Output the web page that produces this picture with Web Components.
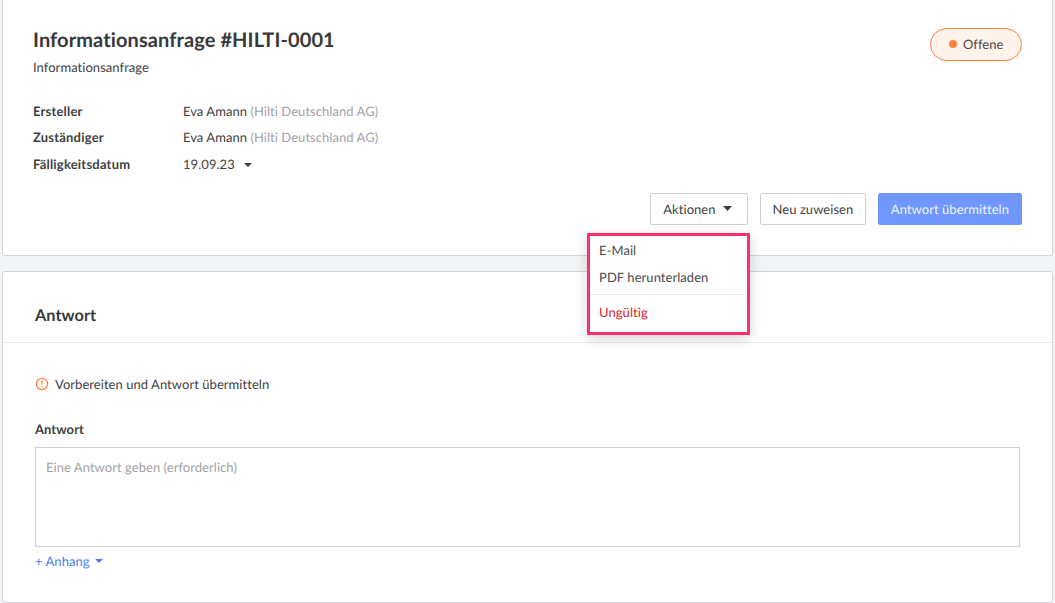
<!DOCTYPE html>
<html lang="de">
<head>
<meta charset="utf-8">
<title>Informationsanfrage</title>
<style>
  html, body { margin: 0; height: 100%; }
  body {
    background: #f3f4f6;
    color: #3f3f42;
    font-family: Lato, "Liberation Sans", sans-serif;
    font-size: 13px;
    font-variant-ligatures: none;
    letter-spacing: .05px;
    text-rendering: geometricPrecision;
    overflow: hidden;
    padding: 0 2px;
  }
</style>
</head>
<body>
<request-card>
  <span slot="title">Informationsanfrage #HILTI-0001</span>
  <span slot="subtitle">Informationsanfrage</span>
  <status-pill slot="status">Offene</status-pill>
  <info-row label="Ersteller">Eva Amann <small-muted>(Hilti Deutschland AG)</small-muted></info-row>
  <info-row label="Zuständiger">Eva Amann <small-muted>(Hilti Deutschland AG)</small-muted></info-row>
  <info-row label="Fälligkeitsdatum">19.09.23 <caret-icon style="margin-left:6px"></caret-icon></info-row>
  <actions-menu slot="actions"></actions-menu>
  <ui-button slot="actions" style="padding:0 11.5px">Neu zuweisen</ui-button>
  <ui-button slot="actions" primary style="padding:0 12px">Antwort übermitteln</ui-button>
</request-card>
<reply-card></reply-card>

<script>
function shadow(el, html) {
  el.attachShadow({mode: 'open'}).innerHTML = html;
}

customElements.define('caret-icon', class extends HTMLElement {
  constructor() {
    super();
    shadow(this, `
      <style>
        :host { display: inline-block; width: 8px; height: 4px; line-height: 0; vertical-align: middle; }
        svg { display: block; width: 100%; height: 100%; fill: currentColor; }
      </style>
      <svg viewBox="0 0 8 4" preserveAspectRatio="none"><path d="M0 0h8L4 4z"/></svg>`);
  }
});

customElements.define('small-muted', class extends HTMLElement {
  constructor() {
    super();
    shadow(this, `<style>:host { color: #a3a3a6; }</style><slot></slot>`);
  }
});

customElements.define('status-pill', class extends HTMLElement {
  constructor() {
    super();
    shadow(this, `
      <style>
        :host {
          display: inline-flex;
          align-items: center;
          gap: 5.5px;
          box-sizing: border-box;
          height: 33px;
          padding: 0 18px 1px 18px;
          border: 1px solid #ff8040;
          border-radius: 17px;
          background: #fff3ec;
          color: #4a4a4d;
          font-size: 13px;
        }
        i { width: 8px; height: 8px; border-radius: 50%; background: #ff8040; }
        span { margin-right: -.5px; }
      </style>
      <i></i><span><slot></slot></span>`);
  }
});

customElements.define('info-row', class extends HTMLElement {
  constructor() {
    super();
    shadow(this, `
      <style>
        :host { display: flex; align-items: center; height: 26.5px; }
        b { width: 150px; font-weight: 700; letter-spacing: .2px; color: #3f3f42; }
        span { color: #3f3f42; }
      </style>
      <b>${this.getAttribute('label')}</b><span><slot></slot></span>`);
  }
});

customElements.define('ui-button', class extends HTMLElement {
  constructor() {
    super();
    shadow(this, `
      <style>
        :host {
          display: inline-flex;
          align-items: center;
          box-sizing: border-box;
          height: 32px;
          padding: 0 12.5px;
          border: 1px solid #cfcfd3;
          border-radius: 2px;
          background: #fff;
          color: #3f3f42;
          font-size: 13px;
        }
        :host([primary]) {
          background: #6f97fd;
          border-color: #6f97fd;
          color: #eef3ff;
        }
      </style>
      <slot></slot>`);
  }
});

customElements.define('actions-menu', class extends HTMLElement {
  constructor() {
    super();
    shadow(this, `
      <style>
        :host { display: block; position: relative; }
        .menu {
          position: absolute;
          top: 40px;
          right: -2px;
          box-sizing: border-box;
          width: 163px;
          height: 102px;
          padding-top: 1px;
          background: #fff;
          border: 3px solid #ff2e6c;
          border-radius: 1px;
          box-shadow: 0 4px 14px rgba(0, 0, 0, .16);
          color: #4a4a4d;
          z-index: 2;
        }
        .item { display: flex; align-items: center; height: 27px; padding-left: 9px; }
        hr { margin: 3px 0 4px; border: 0; border-top: 1px solid #ececee; }
        .danger { color: #d91c2e; }
      </style>
      <ui-button style="padding:0 13px 0 12px">Aktionen<caret-icon style="margin:0 2px 0 7.5px;width:9px;height:5px"></caret-icon></ui-button>
      <div class="menu">
        <div class="item">E-Mail</div>
        <div class="item">PDF herunterladen</div>
        <hr>
        <div class="item danger">Ungültig</div>
      </div>`);
  }
});

customElements.define('request-card', class extends HTMLElement {
  constructor() {
    super();
    shadow(this, `
      <style>
        :host {
          display: block;
          box-sizing: border-box;
          height: 256px;
          padding: 26px 30px 0 30px;
          background: #fff;
          border: 1px solid #d2d4da;
          border-top: 0;
          border-radius: 0 0 3px 3px;
        }
        header { display: flex; justify-content: space-between; align-items: flex-start; }
        .title { font-size: 20px; line-height: 28px; font-weight: 700; letter-spacing: .1px; color: #38383b; }
        .sub { margin-top: 4px; line-height: 18px; color: #3f3f42; }
        .status { margin-top: 2px; }
        .rows { margin-top: 21.5px; }
        .actions { display: flex; justify-content: flex-end; gap: 12px; margin-top: 15.5px; }
      </style>
      <header>
        <div>
          <div class="title"><slot name="title"></slot></div>
          <div class="sub"><slot name="subtitle"></slot></div>
        </div>
        <div class="status"><slot name="status"></slot></div>
      </header>
      <div class="rows"><slot></slot></div>
      <div class="actions"><slot name="actions"></slot></div>`);
  }
});

customElements.define('reply-card', class extends HTMLElement {
  constructor() {
    super();
    shadow(this, `
      <style>
        :host {
          display: block;
          box-sizing: border-box;
          height: 332px;
          margin-top: 15px;
          background: #fff;
          border: 1px solid #d2d4da;
          border-radius: 3px;
        }
        h2 {
          margin: 0;
          box-sizing: border-box;
          height: 71px;
          padding: 16px 32px 0;
          display: flex;
          align-items: center;
          border-bottom: 1px solid #ececee;
          font-size: 16.3px;
          font-weight: 700;
          color: #38383b;
        }
        .body { padding: 0 32px; }
        .notice { display: flex; align-items: center; gap: 6px; margin-top: 31px; height: 20px; color: #3f3f42; }
        .notice svg { flex: none; }
        label { display: block; margin-top: 25px; height: 20px; line-height: 20px; font-weight: 700; color: #3f3f42; }
        .box {
          box-sizing: border-box;
          height: 100px;
          margin-top: 8px;
          padding: 11px 10px;
          border: 1px solid #cfcfd3;
          color: #a3a3a6;
        }
        .attach { display: flex; align-items: center; gap: 5px; margin-top: 5px; height: 18px; color: #4a7bf7; }
      </style>
      <h2>Antwort</h2>
      <div class="body">
        <div class="notice">
          <svg width="14" height="14" viewBox="0 0 14 14" fill="none" stroke="#ff8040" stroke-width="1.3">
            <circle cx="7" cy="7" r="5.6"/>
            <path d="M7 3.8v4M7 9.3v1.1"/>
          </svg>
          <span>Vorbereiten und Antwort übermitteln</span>
        </div>
        <label>Antwort</label>
        <div class="box">Eine Antwort geben (erforderlich)</div>
        <div class="attach"><span>+ Anhang</span><caret-icon></caret-icon></div>
      </div>`);
  }
});
</script>
</body>
</html>
